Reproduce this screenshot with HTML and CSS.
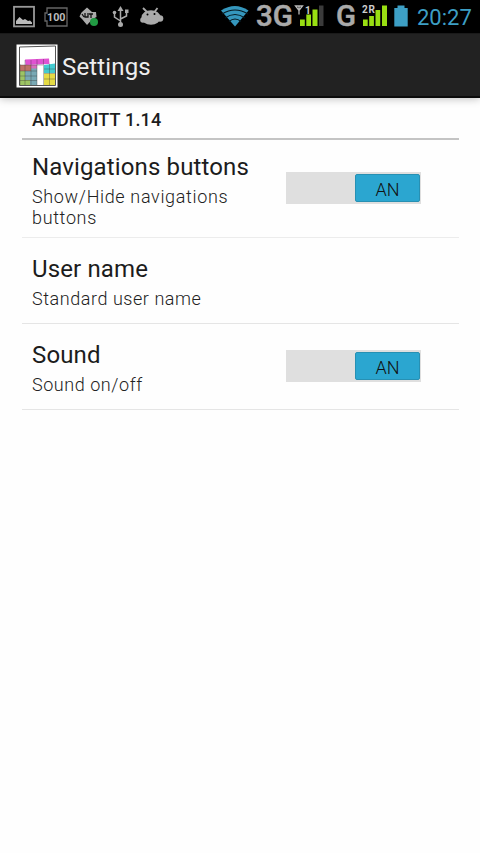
FILE: index.html
```
<!DOCTYPE html>
<html lang="en">
<head>
<meta charset="utf-8">
<title>Settings</title>
<link rel="stylesheet" href="styles.css">
</head>
<body>
<header class="status">
  <svg class="notifications" width="170" height="33" viewBox="0 0 170 33">
    <rect x="14" y="6.800" width="20" height="19.600" fill="none" stroke="#999" stroke-width="1.800"/>
    <path d="M16 24v-3l3.500-4 3.500 3 2-1 3 2 2-.5 2 2v1.500z" fill="#bbb"/>
    <path d="M47 8h20v18H47v-5h-2v-8h2z" fill="none" stroke="#666" stroke-width="1.300"/>
    <text class="charge" x="47" y="20.800" textLength="18.500" lengthAdjust="spacingAndGlyphs">100</text>
    <path d="M87 7.500l5 4.500h4l.5 5-4 2-5.500 6-5-6-2.500-2.500 2-4z" fill="#aaa"/>
    <path d="M82 14l2 3M85 13v4h3v-4M89 14h4M91 14v4" fill="none" stroke="#111" stroke-width="1.300"/>
    <circle cx="94" cy="22" r="4" fill="#219b43"/>
    <path d="M120.500 9v15M120.500 21l-6-4v-4M120.500 19l6-3v-4" fill="none" stroke="#aaa" stroke-width="1.500"/>
    <g fill="#aaa"><path d="M117.500 11l3-5 3 5z"/><circle cx="120.500" cy="24.500" r="2.500"/><circle cx="114.500" cy="12.500" r="1.800"/><path d="M125 9.500h3.500V13H125z"/></g>
    <path d="M143 8l4 4M157.500 8l-3 4" fill="none" stroke="#aaa" stroke-width="1.800"/>
    <ellipse cx="151" cy="17.500" rx="9.500" ry="7.300" fill="#aaa"/>
    <circle cx="143" cy="20" r="2.800" fill="#aaa"/><circle cx="160" cy="18.500" r="3.300" fill="#aaa"/>
    <circle cx="147.500" cy="14.500" r="1"/><circle cx="154.500" cy="14" r="1"/>
  </svg>
  <svg class="network" width="195" height="33" viewBox="216 0 195 33">
    <path d="M221 10.500Q235 1.500 248.500 10.500L235 26.500z" fill="#3597bd"/>
    <path d="M222 14q13-8 26 0M225 18q10-7 20 0M229 21.500q6-5 12 0" fill="none" stroke="#051820" stroke-width="1.100"/>
    <text class="radio" x="256" y="26" textLength="37" lengthAdjust="spacingAndGlyphs">3G</text>
    <path d="M300 19.500h4.800V26H300zM306.300 14.500h4.700V26h-4.700zM312.500 9.500h5V26h-5z" fill="#99df12"/>
    <path d="M319 5.500h4.500V26H319z" fill="#3b3b3b"/>
    <path d="M295.500 6h7l-3.500 4.500zM299 6v8.500" fill="none" stroke="#bbb" stroke-width="1.300"/>
    <text class="sim" x="305" y="13.500">1</text>
    <text class="radio" x="336" y="26" textLength="20" lengthAdjust="spacingAndGlyphs">G</text>
    <path d="M363 19.500h4.700V26H363zM369.200 16h4.700v10h-4.700zM375.500 10h4.700v16h-4.700zM382 5.500h5V26h-5z" fill="#99df12"/>
    <text class="sim" x="362" y="12.800" textLength="13">2R</text>
    <path d="M397.500 5.500h7V8h3.200v18.500H394.300V8h3.200z" fill="#3d9fc5"/>
  </svg>
  <time class="clock">20:27</time>
</header>
<div class="actionbar">
  <svg class="appicon" width="42" height="46" viewBox="16 43 42 46">
    <rect x="16.500" y="44.500" width="41" height="43" fill="#fff"/>
    <path d="M19.500 47l36-1v39.500h-36z" fill="#fff" stroke="#555" stroke-width="1"/>
    <path d="M20 65h17v20H20z" fill="#79a9b5"/>
    <path d="M20 65h11v6H20z" fill="#bd7266"/>
    <path d="M20 71h5v14h-5zM25 80h5v5h-5z" fill="#9dc464"/>
    <path d="M25 59.500l24-1 .5 5.500-24 1z" fill="#e052d2"/>
    <path d="M31 65h6v3.500h-6z" fill="#d56ebd"/>
    <path d="M44 65l11-1.500V73H44z" fill="#43cbd0"/>
    <path d="M44 73.500h11v11.500H44z" fill="#e5db45"/>
    <path d="M20 65h23M44 69h11M20 71h17M20 76h17M44 73.500h11M44 79h11M20 80.500h17M25 60v25M31 60v25M37 59.500v25.500M43.500 59v26M49.500 64v21M20 64v21" fill="none" stroke="#333" stroke-opacity=".5" stroke-width=".7"/>
  </svg>
  <h1 class="title">Settings</h1>
</div>
<main class="settings">
  <h2 class="section">ANDROITT 1.14</h2>
  <div class="row tall">
    <div class="copy"><div class="name">Navigations buttons</div><div class="summary">Show/Hide navigations buttons</div></div>
    <div class="switch"><span class="thumb">AN</span></div>
  </div>
  <div class="row">
    <div class="copy"><div class="name">User name</div><div class="summary">Standard user name</div></div>
  </div>
  <div class="row">
    <div class="copy"><div class="name">Sound</div><div class="summary">Sound on/off</div></div>
    <div class="switch"><span class="thumb">AN</span></div>
  </div>
</main>
</body>
</html>
```
FILE: styles.css
```
* { box-sizing: border-box; }
body {
  margin: 0;
  height: 853px;
  background: #fefefe;
  color: #1c1c1c;
  font-family: Roboto, "Liberation Sans", sans-serif;
  overflow: hidden;
}
.status {
  display: flex;
  height: 33px;
  background: #000;
}
.notifications, .network { flex: none; display: block; }
.network { margin-left: 46px; }
.charge { font: bold 11px Roboto, sans-serif; fill: #bbb; }
.radio { font: 500 29px Roboto, sans-serif; fill: #aaa; stroke: #aaa; stroke-width: .5px; }
.sim { font: bold 10px Roboto, sans-serif; fill: #ccc; }
.clock {
  margin-left: 6px;
  font-size: 22px;
  line-height: 35px;
  color: #3d9fc5;
}
.actionbar {
  display: flex;
  align-items: center;
  height: 65px;
  padding-left: 16px;
  background: #222;
  border-top: 1px solid #1a1a1a;
  border-bottom: 2px solid #0c0c0c;
  box-shadow: 0 1px 8px rgba(0, 0, 0, .25);
}
.appicon { flex: none; margin-top: 2px; }
.title {
  margin: 3px 0 0 4px;
  font-size: 24px;
  font-weight: 400;
  line-height: 30px;
  letter-spacing: .15px;
  color: #eee;
}
.settings { padding: 0 21px 0 22px; }
.section {
  height: 42px;
  margin: 0;
  padding: 11px 10px 0;
  border-bottom: 2px solid #c4c4c4;
  font-size: 18px;
  font-weight: 500;
  line-height: 21px;
  letter-spacing: .2px;
}
.row {
  display: flex;
  align-items: center;
  justify-content: space-between;
  height: 86px;
  padding: 0 38px 0 10px;
  border-bottom: 1px solid #e5e5e5;
}
.row.tall { height: 98px; border-bottom-color: #ececec; }
.copy { width: 230px; padding-top: 1px; }
.name { font-size: 24px; line-height: 31px; letter-spacing: .13px; }
.summary {
  font-size: 18px;
  font-weight: 300;
  line-height: 21px;
  letter-spacing: .55px;
  margin-top: 3px;
  color: #222;
}
.tall .copy { padding-top: 2px; }
.tall .summary { margin-top: 3px; letter-spacing: .65px; }
.switch {
  display: flex;
  justify-content: flex-end;
  width: 135px;
  height: 32px;
  margin-bottom: 2px;
  padding: 2px 1px;
  background: #dfdfdf;
}
.thumb {
  width: 65px;
  height: 28px;
  border: 1px solid #2790b3;
  border-radius: 2px;
  background: #2ba6d0;
  font-size: 18px;
  font-weight: 300;
  line-height: 29px;
  text-align: center;
  color: #111;
}
```
